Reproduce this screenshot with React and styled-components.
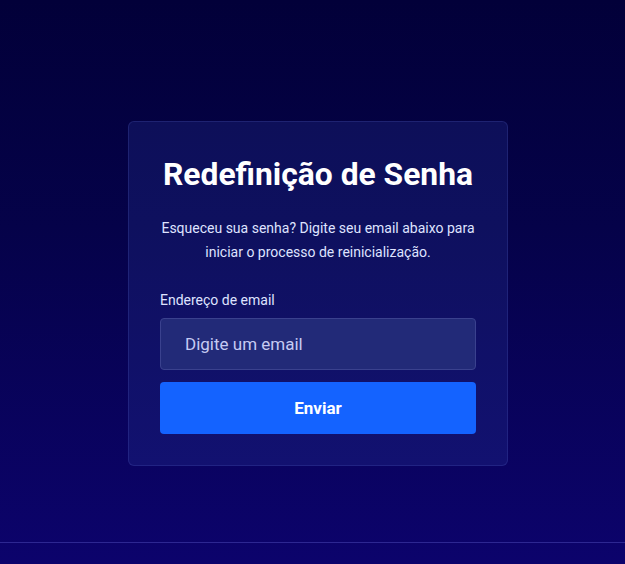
import React from "react";
import styled, { createGlobalStyle } from "styled-components";

const Global = createGlobalStyle`
  html, body { margin: 0; padding: 0; }
  body { font-family: Roboto, "Noto Sans", sans-serif; }
  * { box-sizing: border-box; }
`;

const Page = styled.div`
  min-height: 100vh;
  display: flex;
  flex-direction: column;
  background: linear-gradient(180deg, #020039 0%, #050249 40%, #0c036c 100%);
`;

const Main = styled.main`
  flex: 1;
  display: flex;
  justify-content: center;
  align-items: center;
  padding: 44px 0 0 11px;
`;

const Card = styled.div`
  width: 380px;
  padding: 32px 31px 31px;
  background: rgba(40, 55, 150, 0.28);
  border: 1px solid rgba(90, 105, 200, 0.22);
  border-radius: 6px;
  display: flex;
  flex-direction: column;
  text-align: center;
`;

const Title = styled.h1`
  margin: 0;
  font-size: 31.8px;
  font-weight: 700;
  line-height: 40px;
  color: #ffffff;
`;

const Desc = styled.p`
  margin: 22px 0 0;
  font-size: 14px;
  line-height: 24px;
  color: #dfe3ff;
`;

const Label = styled.label`
  margin-top: 26px;
  text-align: left;
  font-size: 14px;
  line-height: 20px;
  color: #dfe3ff;
`;

const Input = styled.input`
  margin-top: 8px;
  height: 52px;
  width: 100%;
  padding: 0 24px;
  font-family: Roboto, sans-serif;
  font-size: 17px;
  color: #ffffff;
  background: #222a78;
  border: 1px solid #3a418e;
  border-radius: 4px;
  outline: none;
  caret-color: #ffffff;
  &::placeholder { color: #c6cbf3; }
`;

const Button = styled.button`
  margin-top: 12px;
  height: 52px;
  width: 100%;
  border: none;
  border-radius: 4px;
  background: #1463ff;
  color: #ffffff;
  font-family: Roboto, sans-serif;
  font-size: 17px;
  font-weight: 700;
  cursor: pointer;
`;

const Footer = styled.footer`
  height: 22px;
  border-top: 1px solid rgba(110, 110, 220, 0.35);
`;

export default function App() {
  return (
    <>
      <Global />
      <Page>
        <Main>
          <Card>
            <Title>Redefinição de Senha</Title>
            <Desc>
              Esqueceu sua senha? Digite seu email abaixo para
              <br />
              iniciar o processo de reinicialização.
            </Desc>
            <Label htmlFor="email">Endereço de email</Label>
            <Input id="email" type="email" placeholder="Digite um email" autoFocus />
            <Button type="button">Enviar</Button>
          </Card>
        </Main>
        <Footer />
      </Page>
    </>
  );
}
